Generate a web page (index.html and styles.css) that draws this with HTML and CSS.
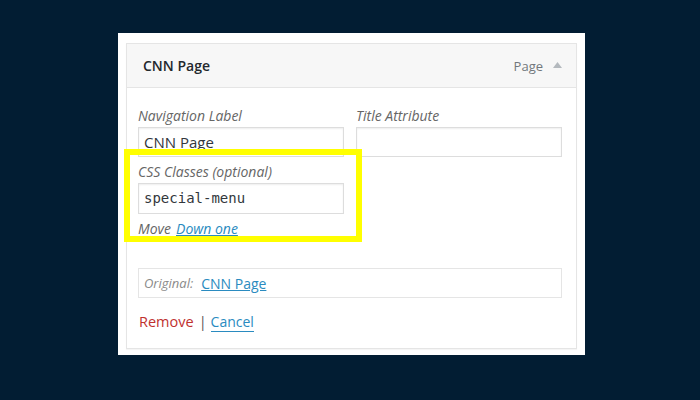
FILE: index.html
```html
<!DOCTYPE html>
<html>
<head>
<meta charset="utf-8">
<link rel="stylesheet" href="styles.css">
</head>
<body>
<div class="card">
  <div class="item">
    <div class="item-head">
      <span class="item-title">CNN Page</span>
      <span class="item-type">Page <svg class="arrow" width="9" height="6" viewBox="0 0 9 6"><path d="M0 6 L4.5 0 L9 6 Z" fill="#b4b9be"/></svg></span>
    </div>
    <div class="item-body">
      <div class="row">
        <div class="field">
          <div class="label">Navigation Label</div>
          <div class="input">CNN Page</div>
        </div>
        <div class="field">
          <div class="label">Title Attribute</div>
          <div class="input"></div>
        </div>
      </div>
      <div class="field single">
        <div class="label">CSS Classes (optional)</div>
        <div class="input mono">special-menu</div>
      </div>
      <div class="move"><span class="move-label">Move</span><a class="link">Down one</a></div>
      <div class="original"><span class="orig-label">Original:</span><a class="link">CNN Page</a></div>
      <div class="actions"><a class="remove">Remove</a><span class="sep">|</span><a class="link cancel">Cancel</a></div>
    </div>
  </div>
  <div class="highlight"></div>
</div>
</body>
</html>
```
FILE: styles.css
```css
html, body { margin: 0; padding: 0; }
body {
  background: #021d33;
  width: 700px;
  height: 400px;
  font-family: "Open Sans", "Noto Sans", sans-serif;
  color: #23282d;
  overflow: hidden;
}
.card {
  position: relative;
  box-sizing: border-box;
  margin: 33px 0 0 118px;
  width: 467px;
  height: 322px;
  background: #fff;
  padding: 10px 8px 6px 8px;
}
.item {
  border: 1px solid #e5e5e5;
  box-shadow: 0 1px 1px rgba(0,0,0,0.04);
  height: 306px;
  box-sizing: border-box;
}
.item-head {
  display: flex;
  align-items: center;
  justify-content: space-between;
  height: 43px;
  background: #f7f7f7;
  border-bottom: 1px solid #e5e5e5;
  padding: 0 14px 0 16px;
}
.item-title {
  font-weight: 600;
  font-size: 14px;
}
.item-type {
  display: flex;
  align-items: center;
  gap: 10px;
  color: #72777c;
  font-size: 13px;
}
.arrow { margin-top: -2px; }
.item-body {
  padding: 18px 14px 0 11px;
}
.row {
  display: flex;
  gap: 12px;
}
.field { width: 206px; }
.label {
  font-style: italic;
  font-size: 14px;
  line-height: 20px;
  color: #666;
}
.input {
  box-sizing: border-box;
  height: 30px;
  margin-top: 1px;
  border: 1px solid #ddd;
  box-shadow: inset 0 1px 2px rgba(0,0,0,0.07);
  padding: 0 5px;
  font-size: 15px;
  line-height: 28px;
  color: #32373c;
}
.single { margin-top: 5px; }
.single .input { margin-top: 1px; height: 31px; line-height: 29px; }
.mono {
  font-family: "DejaVu Sans Mono", "Liberation Mono", monospace;
  font-size: 14px;
}
.move {
  margin-top: 5px;
  font-size: 14px;
  line-height: 20px;
}
.move-label {
  font-style: italic;
  color: #666;
  margin-right: 5px;
}
.link {
  color: #2a8bc0;
  text-decoration: underline;
  font-size: 14px;
}
.move .link { font-style: italic; }
.original {
  box-sizing: border-box;
  margin-top: 29px;
  width: 424px;
  height: 30px;
  border: 1px solid #e5e5e5;
  padding: 0 0 0 5px;
  display: flex;
  align-items: center;
  font-size: 13px;
}
.orig-label {
  font-style: italic;
  color: #8a8a8a;
  font-size: 13px;
  margin-right: 8px;
}
.actions {
  margin-top: 14px;
  display: flex;
  align-items: center;
  font-size: 14.5px;
  line-height: 20px;
  padding-left: 1px;
}
.remove { color: #c0312f; }
.sep { color: #555; margin: 0 4px 0 5px; }
.cancel { font-size: 14px; text-decoration: none; border-bottom: 1px solid #2a8bc0; line-height: 18px; }
.highlight {
  position: absolute;
  left: 6px;
  top: 116px;
  width: 238px;
  height: 93px;
  box-sizing: border-box;
  border: 6px solid #ffff00;
}
```
